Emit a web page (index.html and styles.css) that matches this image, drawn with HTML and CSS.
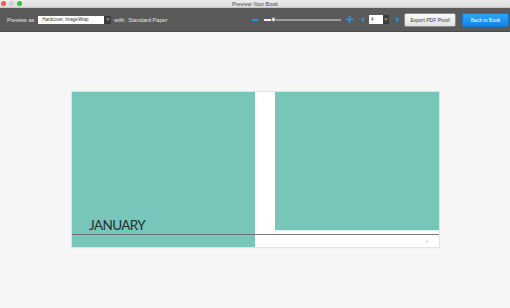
FILE: index.html
```html
<!DOCTYPE html>
<html lang="en">
<head>
  <meta charset="UTF-8">
  <meta name="viewport" content="width=device-width, initial-scale=1.0">
  <title>Preview Your Book</title>
  <link rel="stylesheet" href="styles.css">
</head>
<body>
  <!-- Window title bar -->
  <div class="titlebar">
    <div class="lights">
      <span class="light red"></span>
      <span class="light gray"></span>
      <span class="light green"></span>
    </div>
    <div class="title">Preview Your Book</div>
    <div></div>
  </div>

  <!-- Toolbar -->
  <div class="toolbar">
    <div class="tool-left">
      <span class="label">Preview as</span>
      <div class="select">
        <span class="select-text">Hardcover, ImageWrap</span>
        <span class="select-arrow"><svg width="4" height="3" viewBox="0 0 4 3"><path d="M0 0.5 L4 0.5 L2 2.8 Z" fill="#9a9a9a"/></svg></span>
      </div>
      <span class="label">with</span>
      <span class="label">Standard Paper</span>
    </div>

    <div class="tool-right">
      <span class="zoom-minus"></span>
      <div class="slider">
        <span class="slider-fill"></span>
        <span class="slider-knob"></span>
        <span class="slider-track"></span>
      </div>
      <svg class="zoom-plus" width="7" height="7" viewBox="0 0 7 7"><path d="M2.7 0 H4.3 V2.7 H7 V4.3 H4.3 V7 H2.7 V4.3 H0 V2.7 H2.7 Z" fill="#1e9be8"/></svg>
      <svg class="arrow-left" width="3" height="5" viewBox="0 0 3 5"><path d="M3 0 L0 2.5 L3 5 Z" fill="#1e9be8"/></svg>
      <div class="page-select">
        <span class="page-text">4</span>
        <span class="select-arrow"><svg width="4" height="3" viewBox="0 0 4 3"><path d="M0 0.5 L4 0.5 L2 2.8 Z" fill="#9a9a9a"/></svg></span>
      </div>
      <svg class="arrow-right" width="3" height="5" viewBox="0 0 3 5"><path d="M0 0 L3 2.5 L0 5 Z" fill="#1e9be8"/></svg>
      <button class="btn btn-export">Export PDF Proof</button>
      <button class="btn btn-back">Back to Book</button>
    </div>
  </div>

  <!-- Book preview -->
  <div class="content">
    <div class="spread">
      <div class="page-left">
        <span class="month">JANUARY</span>
      </div>
      <div class="gutter"></div>
      <div class="page-right">
        <div class="photo"></div>
        <div class="page-foot">
          <span class="page-num">1</span>
        </div>
      </div>
      <div class="rule"></div>
    </div>
  </div>
</body>
</html>
```

FILE: styles.css
```css
body {
  font-family: "Liberation Sans", Arial, sans-serif;
  margin: 0;
  padding: 0;
  width: 510px;
  height: 308px;
  background-color: #f6f6f6;
  overflow: hidden;
}

/* title bar */
.titlebar {
  height: 8px;
  display: grid;
  grid-template-columns: 1fr auto 1fr;
  align-items: center;
  background: linear-gradient(#ebebeb, #dcdcdc);
  border-bottom: 1px solid #c8c8c8;
  box-sizing: border-box;
}

.lights {
  display: flex;
  gap: 3px;
  padding-left: 1px;
}

.light {
  width: 5px;
  height: 5px;
  border-radius: 50%;
}

.red { background-color: #ee5b53; }
.gray { background-color: #cfcfcf; }
.green { background-color: #2cc23f; }

.title {
  font-size: 5.5px;
  color: #4a4a4a;
}

/* toolbar */
.toolbar {
  height: 24px;
  display: flex;
  align-items: center;
  justify-content: space-between;
  background-color: #5a5a5a;
  padding: 0 1px 0 7px;
  border-bottom: 1px solid #4a4a4a;
  box-sizing: border-box;
}

.tool-left, .tool-right {
  display: flex;
  align-items: center;
}

.label {
  font-size: 5.6px;
  color: #e6e6e6;
  margin-right: 4px;
}

.select {
  display: flex;
  width: 73px;
  height: 8px;
  margin-right: 3px;
}

.select-text {
  flex: 1;
  background-color: #ffffff;
  font-size: 4.5px;
  line-height: 8px;
  color: #333;
  padding-left: 4px;
}

.select-arrow {
  width: 7px;
  display: flex;
  align-items: center;
  justify-content: center;
  background-color: #3c3c3c;
}

.zoom-minus {
  width: 6px;
  height: 2px;
  background-color: #1e9be8;
  margin-right: 6px;
}

.slider {
  width: 77px;
  height: 6px;
  display: flex;
  align-items: center;
  margin-right: 5px;
}

.slider-fill {
  width: 7px;
  height: 2px;
  background-color: #f2f2f2;
}

.slider-knob {
  width: 5px;
  height: 5px;
  border-radius: 50%;
  background-color: #eeeeee;
  border: 1px solid #777;
  box-sizing: border-box;
}

.slider-track {
  flex: 1;
  height: 2px;
  background-color: #9c9c9c;
}

.zoom-plus {
  margin-right: 8px;
}

.arrow-left {
  margin-right: 5px;
}

.page-select {
  display: flex;
  width: 20px;
  height: 9px;
  margin-right: 7px;
}

.page-text {
  flex: 1;
  background-color: #ffffff;
  font-size: 4.5px;
  line-height: 9px;
  color: #333;
  padding-left: 2px;
}

.page-select .select-arrow {
  width: 6px;
}

.arrow-right {
  margin-right: 5px;
}

.btn {
  height: 14px;
  padding: 0;
  font-family: "Liberation Sans", Arial, sans-serif;
  font-size: 5px;
  border-radius: 2px;
  box-sizing: border-box;
}

.btn-export {
  width: 52px;
  margin-right: 6px;
  color: #333;
  background: linear-gradient(#fafafa, #e2e2e2);
  border: 1px solid #8a8a8a;
}

.btn-back {
  width: 47px;
  color: #ffffff;
  background: linear-gradient(#2fa4fa, #0f86ec);
  border: 1px solid #1b78c8;
}

/* book preview */
.content {
  padding: 60px 0 0 72px;
}

.spread {
  position: relative;
  width: 367px;
  height: 155px;
  display: grid;
  grid-template-columns: 183px 20px 164px;
  background-color: #ffffff;
  box-shadow: 0 0 0 1px #e2e2e2, 1px 1px 1px rgba(0, 0, 0, 0.08);
}

.page-left {
  background-color: #78c6ba;
  display: flex;
  align-items: flex-end;
  padding: 0 0 15px 17px;
}

.month {
  font-family: Lato, "Open Sans", sans-serif;
  font-weight: 400;
  font-size: 13.5px;
  line-height: 14px;
  letter-spacing: -0.6px;
  color: #25302f;
}

.gutter {
  background-color: #ffffff;
}

.page-right {
  display: flex;
  flex-direction: column;
}

.photo {
  height: 138px;
  background-color: #78c6ba;
  border-bottom: 1px solid #e4f3f1;
}

.page-foot {
  flex: 1;
  display: flex;
  justify-content: flex-end;
  align-items: flex-end;
  padding: 0 11px 3px 0;
}

.page-num {
  font-size: 4px;
  color: #aaa;
}

.rule {
  position: absolute;
  left: 0;
  right: 0;
  top: 142px;
  height: 1px;
  background-color: #666;
  opacity: 0.85;
}
```
